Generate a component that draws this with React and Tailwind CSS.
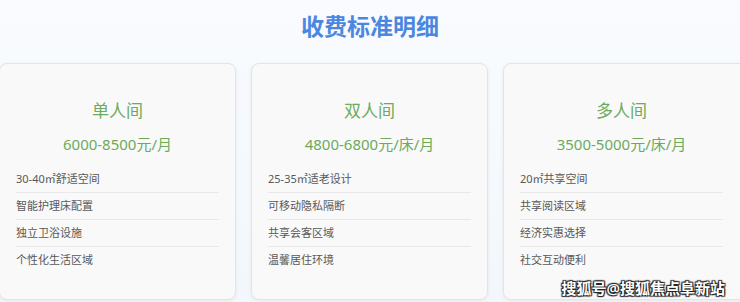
import React from 'react';

const plans = [
  {
    name: '单人间',
    price: '6000-8500元/月',
    features: ['30-40㎡舒适空间', '智能护理床配置', '独立卫浴设施', '个性化生活区域'],
  },
  {
    name: '双人间',
    price: '4800-6800元/床/月',
    features: ['25-35㎡适老设计', '可移动隐私隔断', '共享会客区域', '温馨居住环境'],
  },
  {
    name: '多人间',
    price: '3500-5000元/床/月',
    features: ['20㎡共享空间', '共享阅读区域', '经济实惠选择', '社交互动便利'],
  },
];

function PlanCard({ plan, last }) {
  return (
    <div
      className={`shrink-0 rounded-lg border-[1.5px] border-[#e4e4e4] bg-[#f9f9f9] pt-[35px] pb-[25px] shadow-[0_1px_4px_rgba(0,0,0,0.06)] ${
        last ? 'w-[250px] pl-4 pr-[29px]' : 'w-[237px] px-4'
      }`}
    >
      <h3 className="text-center text-[17px] leading-[24px] text-[#6cab5c]">{plan.name}</h3>
      <div className="mt-[10px] text-center text-[15px] leading-[22px] text-[#6cab5c]">{plan.price}</div>
      <ul className="mt-[11px]">
        {plan.features.map((f, i) => (
          <li
            key={f}
            className={`flex h-[27px] items-center text-[11px] text-[#585858] ${
              i < plan.features.length - 1 ? 'border-b border-[#e9e9e9]' : ''
            }`}
          >
            {f}
          </li>
        ))}
      </ul>
    </div>
  );
}

export default function App() {
  return (
    <div
      className="relative h-[302px] w-[740px] overflow-hidden bg-gradient-to-b from-[#f9fbfe] to-[#f3f7fb]"
      style={{ fontFamily: '"Noto Sans", "Noto Sans CJK SC", sans-serif' }}
    >
      <h2 className="pt-[10px] text-center text-[23px] font-bold leading-[32px] text-[#4b87e1]">
        收费标准明细
      </h2>
      <div className="-ml-px mt-[21px] flex gap-[15px]">
        {plans.map((p, i) => (
          <PlanCard key={p.name} plan={p} last={i === plans.length - 1} />
        ))}
      </div>

      {/* watermark */}
      <div className="absolute right-[15px] bottom-[4px] text-[15px] font-semibold leading-[20px] text-white [text-shadow:0_0_1px_#222,1px_1px_1px_#222,-1px_-1px_1px_#222,1px_-1px_1px_#222,-1px_1px_1px_#222]">
        搜狐号@搜狐焦点阜新站
      </div>
    </div>
  );
}
